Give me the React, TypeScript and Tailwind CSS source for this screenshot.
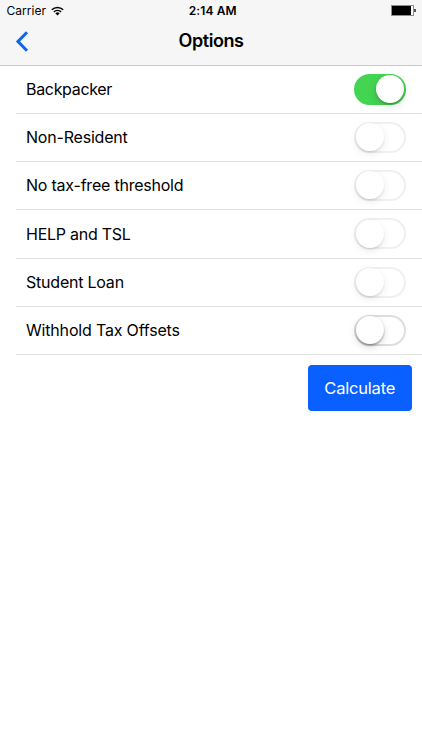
import { useState } from "react";
import clsx from "clsx";

interface Option {
  label: string;
  on: boolean;
  strong?: boolean;
  height: string;
  text: string;
}

const OPTIONS: Option[] = [
  { label: "Backpacker", on: true, height: "h-12", text: "pb-[2px] tracking-[-0.32px]" },
  { label: "Non-Resident", on: false, height: "h-12", text: "pb-[2px] tracking-[-0.2px]" },
  { label: "No tax-free threshold", on: false, height: "h-12", text: "pb-px tracking-[-0.22px]" },
  { label: "HELP and TSL", on: false, height: "h-[49px]", text: "tracking-[-0.25px]" },
  { label: "Student Loan", on: false, height: "h-12", text: "pb-[2px] tracking-[-0.22px]" },
  { label: "Withhold Tax Offsets", on: false, strong: true, height: "h-12", text: "pb-[2px] tracking-[-0.18px]" },
];

function StatusBar() {
  return (
    <div className="grid h-[22px] grid-cols-3 items-center pl-[6.5px] pr-[6px] text-[12px] leading-none">
      <div className="flex items-center gap-[5px]">
        <span className="tracking-[0.05px]">Carrier</span>
        <svg width="13" height="10" viewBox="0 0 13 10" className="mb-px" fill="none" stroke="#000" strokeWidth="1.5">
          <path d="M0.8 3.7a8.2 8.2 0 0 1 11.4 0" />
          <path d="M2.9 5.9a5.2 5.2 0 0 1 7.2 0" />
          <path d="M6.5 9.6 4.4 7.4a3 3 0 0 1 4.2 0z" fill="#000" stroke="none" />
        </svg>
      </div>
      <span className="pl-[3px] text-center font-semibold tracking-[0.12px]">2:14 AM</span>
      <div className="mb-px flex items-center justify-end">
        <div className="h-[11px] w-[23px] border border-[#8e8e8e] bg-white">
          <div className="h-full w-[19px] bg-black" />
        </div>
        <div className="h-[3px] w-[2px] bg-[#555]" />
      </div>
    </div>
  );
}

function Toggle({ on, strong, onClick }: { on: boolean; strong?: boolean; onClick: () => void }) {
  return (
    <button
      role="switch"
      aria-checked={on}
      onClick={onClick}
      className={clsx(
        "mb-px flex h-[31px] w-[52px] items-center rounded-full border-2 transition-colors",
        on ? "justify-end border-[#43d551] bg-[#43d551] pl-px" : "justify-start bg-white",
        !on && (strong ? "border-[#dedede]" : "border-[#f0f0f0]")
      )}
    >
      <span
        className={clsx(
          "size-7 shrink-0 rounded-full bg-white",
          strong
            ? "shadow-[0_1.5px_2px_rgba(0,0,0,0.34),0_3px_9px_rgba(0,0,0,0.14)]"
            : on
              ? "shadow-[0_1.5px_2px_rgba(0,0,0,0.2),0_3px_9px_rgba(0,0,0,0.15)]"
              : "shadow-[0_1.5px_2px_rgba(0,0,0,0.1),0_3px_9px_rgba(0,0,0,0.08)]"
        )}
      />
    </button>
  );
}

export default function App() {
  const [options, setOptions] = useState(OPTIONS);

  const toggle = (label: string) =>
    setOptions((prev) => prev.map((o) => (o.label === label ? { ...o, on: !o.on } : o)));

  return (
    <div className="h-screen overflow-hidden bg-white font-['Inter',sans-serif] text-black">
      <header className="h-[66px] border-b border-[#c9c9cb] bg-[#f6f6f6]">
        <StatusBar />
        <div className="grid h-[38px] grid-cols-3 items-center px-[15px]">
          <button aria-label="Back" className="w-fit">
            <svg width="14" height="21" viewBox="0 0 14 21" fill="none" stroke="#1262ef" strokeWidth="3">
              <path d="M12 1.3 3 10.5 12 19.7" />
            </svg>
          </button>
          <h1 className="text-center text-[18px] font-semibold leading-none tracking-[-0.45px]">Options</h1>
        </div>
      </header>

      <ul className="pl-4">
        {options.map((o) => (
          <li
            key={o.label}
            className={clsx("flex items-center justify-between border-b border-[#e2e2e4] pl-[10px] pr-4", o.height)}
          >
            <span className={clsx("text-[16px] leading-none", o.text)}>{o.label}</span>
            <Toggle on={o.on} strong={o.strong} onClick={() => toggle(o.label)} />
          </li>
        ))}
      </ul>

      <div className="flex justify-end pr-[10.5px] pt-[10px]">
        <button className="h-[46px] w-[103.5px] rounded-[4px] bg-[#0a60ff] text-[16.5px] leading-none tracking-[-0.2px] text-white">
          Calculate
        </button>
      </div>
    </div>
  );
}
